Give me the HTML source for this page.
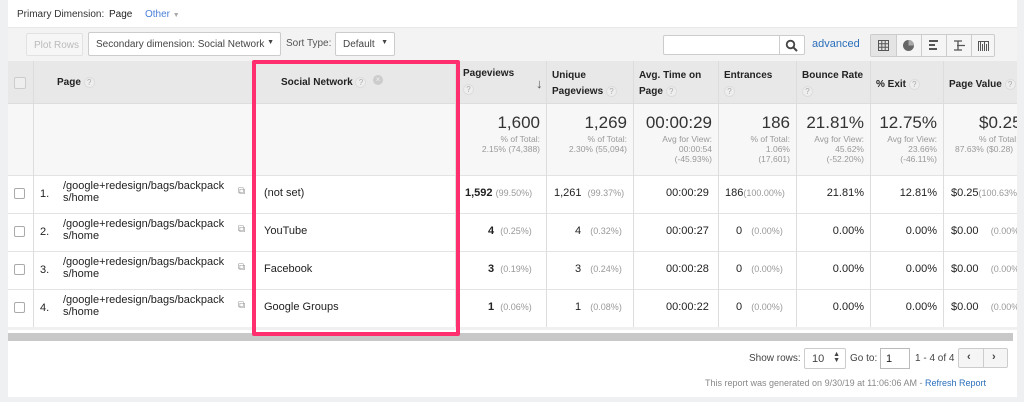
<!DOCTYPE html>
<html><head><meta charset="utf-8"><style>
*{box-sizing:border-box;margin:0;padding:0}
body{width:1024px;height:402px;overflow:hidden;background:#fff;font-family:"Liberation Sans",Arial,sans-serif;color:#222;position:relative}
.a{position:absolute}
.s{font-size:10px}
.h{font-weight:bold;font-size:10px;color:#222}
.q{display:inline-block;width:11px;height:11px;border-radius:50%;background:#eee;border:1px solid #ddd;color:#aaa;font-size:8px;line-height:9px;text-align:center;font-weight:normal;vertical-align:middle}
.vl{position:absolute;top:61px;height:266px;width:1px;background:#ddd}
.hl{position:absolute;left:8px;width:1009px;height:1px;background:#e3e3e3}
.g{color:#999;font-size:9px}
.r{text-align:right}
.big{font-size:17px;color:#333;text-align:right;line-height:22px}
.sm{font-size:8.5px;color:#999;text-align:right;line-height:10px}
.cb{position:absolute;left:14px;width:11px;height:11px;border:1px solid #aaa;border-radius:2px;background:#fff}
.btn{position:absolute;border:1px solid #ccc;border-radius:2px;background:#fff;font-size:10px;color:#444}
</style></head><body>
<div class="a" style="left:0;top:0;width:8px;height:402px;background:#eef0f2"></div>
<div class="a s" style="left:17px;top:9px;color:#333">Primary Dimension:</div>
<div class="a s" style="left:109px;top:9px;color:#222;font-weight:500">Page</div>
<div class="a s" style="left:145px;top:9px;color:#4a7fd8">Other <span style="color:#aaa;font-size:7px">▼</span></div>
<div class="a" style="left:8px;top:27px;width:1009px;height:34px;background:#f3f3f3;border-top:1px solid #e8e8e8"></div>
<div class="btn" style="left:26px;top:33px;width:57px;height:23px;color:#bbb;padding:6px 0 0 7px;background:#f6f6f6;border-color:#e2e2e2">Plot Rows</div>
<div class="btn" style="left:88px;top:32px;width:193px;height:24px;padding:6px 0 0 7px">Secondary dimension: Social Network <span style="position:absolute;right:6px;top:6px;font-size:7px">▼</span></div>
<div class="a s" style="left:286px;top:38px;color:#555">Sort Type:</div>
<div class="btn" style="left:335px;top:32px;width:60px;height:24px;padding:6px 0 0 7px">Default <span style="position:absolute;right:6px;top:6px;font-size:7px">▼</span></div>
<div class="btn" style="left:663px;top:35px;width:142px;height:20px"><div style="position:absolute;left:115px;top:0;width:1px;height:18px;background:#ccc"></div>
<svg class="a" style="left:121px;top:3px" width="14" height="14" viewBox="0 0 14 14"><circle cx="5.5" cy="5.5" r="3.8" fill="none" stroke="#444" stroke-width="1.8"/><path d="M8.3 8.3L12 12" stroke="#444" stroke-width="2"/></svg></div>
<div class="a" style="left:812px;top:38px;font-size:11px;color:#2a6fbb">advanced</div>
<div class="btn" style="left:870px;top:34px;width:125px;height:23px;background:#f5f5f5;border-color:#ccc"></div>
<div class="a" style="left:871px;top:35px;width:25px;height:21px;background:#e4e4e4"></div>
<svg class="a" style="left:871px;top:35px" width="125" height="21">
<g stroke="#ccc"><line x1="25.5" y1="0" x2="25.5" y2="21"/><line x1="50.5" y1="0" x2="50.5" y2="21"/><line x1="75.5" y1="0" x2="75.5" y2="21"/><line x1="100.5" y1="0" x2="100.5" y2="21"/></g>
<g fill="none" stroke="#555" stroke-width="1"><rect x="7.5" y="5.5" width="10" height="10"/><path d="M10.8 5.5v10M14.2 5.5v10M7.5 8.8h10M7.5 12.2h10"/></g>
<circle cx="37.5" cy="10.5" r="5.5" fill="#666"/><path d="M37.5 5v5.5h5.5A5.5 5.5 0 0 0 37.5 5z" fill="#aaa"/>
<g fill="#555"><rect x="58" y="5" width="9" height="2"/><rect x="58" y="9" width="6" height="2"/><rect x="58" y="13" width="8" height="2"/></g>
<path d="M83 6h8M86 10.5h8M83 15h8M87 6v9" stroke="#555" stroke-width="1.3" fill="none"/>
<g stroke="#555" stroke-width="1"><path d="M107.5 7v9M109.5 7v9M111.5 9v7M113.5 7v9M115.5 9v7M117.5 7v9M107 6.5h11"/></g>
</svg>
<div class="a" style="left:8px;top:61px;width:1009px;height:42px;background:#e8e8e8"></div>
<div class="a" style="left:8px;top:103px;width:1009px;height:72px;background:#f7f7f7"></div>
<div class="cb" style="top:77px;width:12px;height:12px;border-color:#ccc;background:#eee"></div>
<div class="a h" style="left:57px;top:77px">Page <span class="q">?</span></div>
<div class="a h" style="left:281px;top:77px">Social Network <span class="q">?</span></div>
<div class="a" style="left:373px;top:75px;width:10px;height:10px;border-radius:50%;background:#ccc;color:#eee;font-size:8px;line-height:10px;text-align:center">×</div>
<div class="a h" style="left:463px;top:68px">Pageviews<br><span class="q" style="margin-top:5px">?</span></div>
<div class="a" style="left:536px;top:76px;color:#555;font-size:13px">↓</div>
<div class="a h" style="left:552px;top:68px;line-height:16px">Unique<br>Pageviews <span class="q">?</span></div>
<div class="a h" style="left:639px;top:68px;line-height:16px">Avg. Time on<br>Page <span class="q">?</span></div>
<div class="a h" style="left:724px;top:68px;line-height:16px">Entrances<br><span class="q">?</span></div>
<div class="a h" style="left:802px;top:68px;line-height:16px">Bounce Rate<br><span class="q">?</span></div>
<div class="a h" style="left:876px;top:79px">% Exit <span class="q">?</span></div>
<div class="a h" style="left:949px;top:79px">Page Value <span class="q">?</span></div>
<div class="a" style="left:455px;top:112px;width:85px"><div class="big">1,600</div><div class="sm">% of Total:<br>2.15% (74,388)</div></div>
<div class="a" style="left:546px;top:112px;width:81px"><div class="big">1,269</div><div class="sm">% of Total:<br>2.30% (55,094)</div></div>
<div class="a" style="left:633px;top:112px;width:79px"><div class="big">00:00:29</div><div class="sm">Avg for View:<br>00:00:54<br>(-45.93%)</div></div>
<div class="a" style="left:718px;top:112px;width:72px"><div class="big">186</div><div class="sm">% of Total:<br>1.06%<br>(17,601)</div></div>
<div class="a" style="left:796px;top:112px;width:68px"><div class="big">21.81%</div><div class="sm">Avg for View:<br>45.62%<br>(-52.20%)</div></div>
<div class="a" style="left:870px;top:112px;width:67px"><div class="big">12.75%</div><div class="sm">Avg for View:<br>23.66%<br>(-46.11%)</div></div>
<div class="a" style="left:943px;top:112px;width:80px;overflow:hidden;white-space:nowrap"><div class="big" style="text-align:left;padding-left:36px">$0.25</div><div class="sm" style="text-align:left;padding-left:36px">% of Total:<br><span style="margin-left:-24px">87.63% ($0.28)</span></div></div>
<div class="hl" style="top:103px;background:#ddd"></div>
<div class="hl" style="top:175px"></div><div class="hl" style="top:213px"></div><div class="hl" style="top:251px"></div><div class="hl" style="top:289px"></div>
<div class="vl" style="left:33px"></div><div class="vl" style="left:455px"></div><div class="vl" style="left:546px"></div><div class="vl" style="left:633px"></div><div class="vl" style="left:718px"></div><div class="vl" style="left:796px"></div><div class="vl" style="left:870px"></div><div class="vl" style="left:943px"></div>
<div class="cb" style="top:188px"></div><div class="cb" style="top:226px"></div><div class="cb" style="top:264px"></div><div class="cb" style="top:302px"></div>
<div class="a s" style="left:40px;top:188px;font-size:11px">1.</div>
<div class="a s" style="left:40px;top:226px;font-size:11px">2.</div>
<div class="a s" style="left:40px;top:264px;font-size:11px">3.</div>
<div class="a s" style="left:40px;top:302px;font-size:11px">4.</div>
<div class="a" style="left:63px;top:180px;font-size:11px;line-height:12px">/google+redesign/bags/backpack<br>s/home</div>
<div class="a" style="left:63px;top:218px;font-size:11px;line-height:12px">/google+redesign/bags/backpack<br>s/home</div>
<div class="a" style="left:63px;top:256px;font-size:11px;line-height:12px">/google+redesign/bags/backpack<br>s/home</div>
<div class="a" style="left:63px;top:294px;font-size:11px;line-height:12px">/google+redesign/bags/backpack<br>s/home</div>
<div class="a g" style="left:238px;top:186px;font-size:10px">⧉</div><div class="a g" style="left:238px;top:224px;font-size:10px">⧉</div><div class="a g" style="left:238px;top:262px;font-size:10px">⧉</div><div class="a g" style="left:238px;top:300px;font-size:10px">⧉</div>
<div class="a" style="left:264px;top:187px;font-size:11px">(not set)</div>
<div class="a" style="left:264px;top:225px;font-size:11px">YouTube</div>
<div class="a" style="left:264px;top:263px;font-size:11px">Facebook</div>
<div class="a" style="left:264px;top:301px;font-size:11px">Google Groups</div>
<div class="a" style="left:465px;top:187px;font-size:11px;white-space:nowrap"><b>1,592</b> <span class="g">(99.50%)</span></div>
<div class="a" style="left:488px;top:225px;font-size:11px"><b>4</b> &nbsp;<span class="g">(0.25%)</span></div>
<div class="a" style="left:488px;top:263px;font-size:11px"><b>3</b> &nbsp;<span class="g">(0.19%)</span></div>
<div class="a" style="left:488px;top:301px;font-size:11px"><b>1</b> &nbsp;<span class="g">(0.06%)</span></div>
<div class="a" style="left:554px;top:187px;font-size:11px;white-space:nowrap">1,261 &nbsp;<span class="g">(99.37%)</span></div>
<div class="a" style="left:575px;top:225px;font-size:11px">4 &nbsp;&nbsp;<span class="g">(0.32%)</span></div>
<div class="a" style="left:575px;top:263px;font-size:11px">3 &nbsp;&nbsp;<span class="g">(0.24%)</span></div>
<div class="a" style="left:575px;top:301px;font-size:11px">1 &nbsp;&nbsp;<span class="g">(0.08%)</span></div>
<div class="a" style="left:666px;top:187px;font-size:11px">00:00:29</div><div class="a" style="left:666px;top:225px;font-size:11px">00:00:27</div><div class="a" style="left:666px;top:263px;font-size:11px">00:00:28</div><div class="a" style="left:666px;top:301px;font-size:11px">00:00:22</div>
<div class="a" style="left:725px;top:187px;font-size:11px;white-space:nowrap">186<span class="g">(100.00%)</span></div>
<div class="a" style="left:736px;top:225px;font-size:11px">0 &nbsp;&nbsp;<span class="g">(0.00%)</span></div>
<div class="a" style="left:736px;top:263px;font-size:11px">0 &nbsp;&nbsp;<span class="g">(0.00%)</span></div>
<div class="a" style="left:736px;top:301px;font-size:11px">0 &nbsp;&nbsp;<span class="g">(0.00%)</span></div>
<div class="a r" style="left:796px;top:187px;width:68px;font-size:11px">21.81%</div><div class="a r" style="left:796px;top:225px;width:68px;font-size:11px">0.00%</div><div class="a r" style="left:796px;top:263px;width:68px;font-size:11px">0.00%</div><div class="a r" style="left:796px;top:301px;width:68px;font-size:11px">0.00%</div>
<div class="a r" style="left:870px;top:187px;width:67px;font-size:11px">12.81%</div><div class="a r" style="left:870px;top:225px;width:67px;font-size:11px">0.00%</div><div class="a r" style="left:870px;top:263px;width:67px;font-size:11px">0.00%</div><div class="a r" style="left:870px;top:301px;width:67px;font-size:11px">0.00%</div>
<div class="a" style="left:951px;top:187px;font-size:11px;white-space:nowrap">$0.25<span class="g">(100.63%)</span></div>
<div class="a" style="left:951px;top:225px;font-size:11px;white-space:nowrap">$0.00 &nbsp;&nbsp;&nbsp;<span class="g">(0.00%)</span></div>
<div class="a" style="left:951px;top:263px;font-size:11px;white-space:nowrap">$0.00 &nbsp;&nbsp;&nbsp;<span class="g">(0.00%)</span></div>
<div class="a" style="left:951px;top:301px;font-size:11px;white-space:nowrap">$0.00 &nbsp;&nbsp;&nbsp;<span class="g">(0.00%)</span></div>
<div class="a" style="left:1017px;top:0;width:7px;height:402px;background:#eef0f2"></div>
<div class="a" style="left:8px;top:327px;width:1009px;height:3px;background:#f0f0f0"></div>
<div class="a" style="left:8px;top:333px;width:1005px;height:8px;background:#c8c8c8"></div>
<div class="a" style="left:252px;top:60px;width:208px;height:276px;border:4px solid #ff2e6e;border-radius:2px"></div>
<div class="a s" style="left:749px;top:353px;color:#444">Show rows:</div>
<div class="btn" style="left:804px;top:348px;width:42px;height:21px;padding:4px 0 0 7px;font-size:11px">10<span style="position:absolute;right:5px;top:3px;font-size:7px;line-height:6px">▲<br>▼</span></div>
<div class="a s" style="left:850px;top:353px;color:#444">Go to:</div>
<div class="a" style="left:880px;top:348px;width:30px;height:21px;border:1px solid #bbb;font-size:11px;padding:4px 0 0 5px">1</div>
<div class="a s" style="left:915px;top:353px;color:#444">1 - 4 of 4</div>
<div class="btn" style="left:958px;top:348px;width:50px;height:20px;background:#f5f5f5"><div style="position:absolute;left:24px;top:0;width:1px;height:18px;background:#ccc"></div><span style="position:absolute;left:8px;top:2px;font-weight:bold;font-size:11px">‹</span><span style="position:absolute;left:33px;top:2px;font-weight:bold;font-size:11px">›</span></div>
<div class="a" style="left:705px;top:378px;font-size:9px;color:#888">This report was generated on 9/30/19 at 11:06:06 AM - <span style="color:#2a6fbb">Refresh Report</span></div>
<div class="a" style="left:8px;top:397px;width:1009px;height:5px;background:#eef0f2"></div>
</body></html>
